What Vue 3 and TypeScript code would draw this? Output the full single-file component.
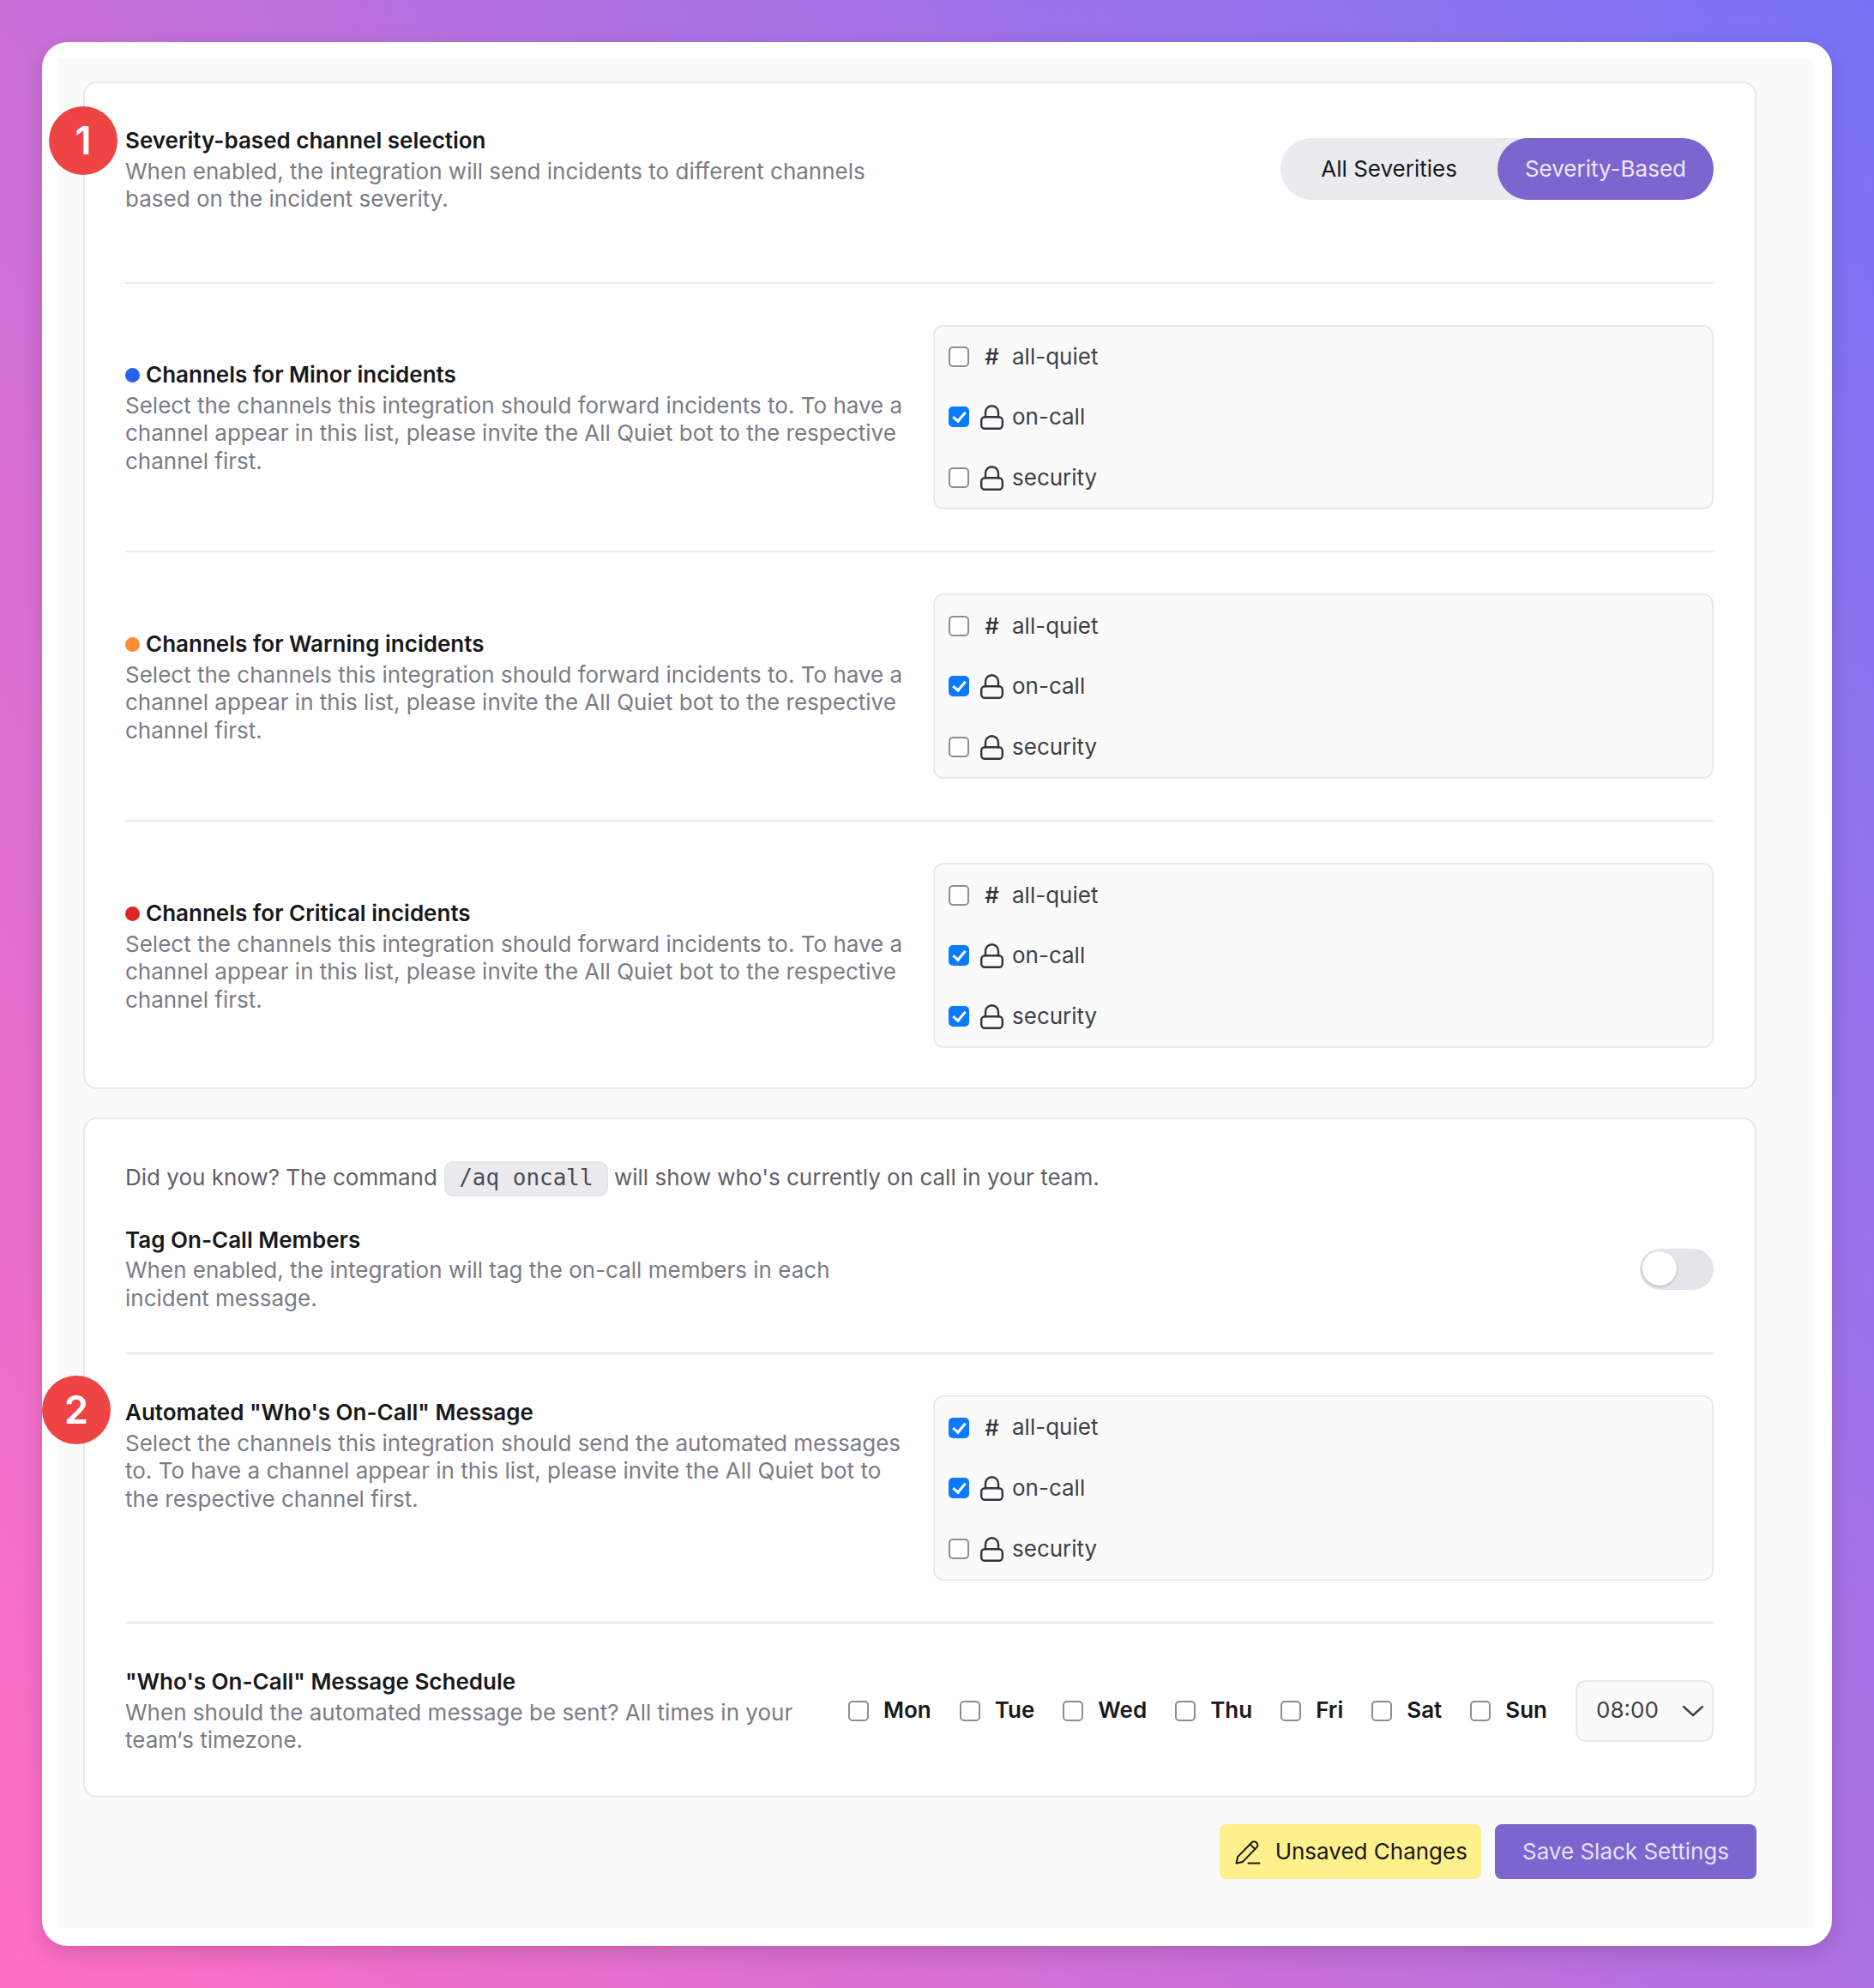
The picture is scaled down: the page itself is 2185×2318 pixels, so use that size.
<script setup lang="ts">
interface Channel {
  name: string;
  isPrivate: boolean;
  checked: boolean;
}

interface SeverityRow {
  label: string;
  dot: string;
  selected: string[];
}

const channelNames: Array<Pick<Channel, 'name' | 'isPrivate'>> = [
  { name: 'all-quiet', isPrivate: false },
  { name: 'on-call', isPrivate: true },
  { name: 'security', isPrivate: true },
];

const withSelection = (selected: string[]): Channel[] =>
  channelNames.map((c) => ({ ...c, checked: selected.includes(c.name) }));

const severities: SeverityRow[] = [
  { label: 'Minor', dot: '#2563eb', selected: ['on-call'] },
  { label: 'Warning', dot: '#fd8d30', selected: ['on-call'] },
  { label: 'Critical', dot: '#dc2626', selected: ['on-call', 'security'] },
];

const days = ['Mon', 'Tue', 'Wed', 'Thu', 'Fri', 'Sat', 'Sun'];
</script>

<template>
  <div class="page">
    <div class="window">
      <span class="marker marker--one">1</span>
      <span class="marker marker--two">2</span>

      <div class="inner">
        <section class="card card--first">
          <div class="row row--lead">
            <div class="info info--narrow">
              <h3 class="title">Severity-based channel selection</h3>
              <p class="desc">When enabled, the integration will send incidents to different channels based on the incident severity.</p>
            </div>
            <div class="segment">
              <span class="segment__item">All Severities</span>
              <span class="segment__item segment__item--active">Severity-Based</span>
            </div>
          </div>

          <div v-for="sev in severities" :key="sev.label" class="row row--split">
            <div class="info">
              <h3 class="title">
                <i class="dot" :style="{ background: sev.dot }"></i>Channels for {{ sev.label }} incidents
              </h3>
              <p class="desc">Select the channels this integration should forward incidents to. To have a channel appear in this list, please invite the All Quiet bot to the respective channel first.</p>
            </div>
            <div class="panel">
              <label v-for="ch in withSelection(sev.selected)" :key="ch.name" class="channel">
                <input class="check" type="checkbox" :checked="ch.checked" />
                <svg v-if="ch.isPrivate" class="channel__icon" viewBox="0 0 27 29" fill="none" stroke="currentColor" stroke-width="2.4" stroke-linecap="round" stroke-linejoin="round">
                  <rect x="1.2" y="14.2" width="24.6" height="13.6" rx="4" />
                  <path d="M6 14.2V8.7a7.5 7.5 0 0 1 15 0v5.5" />
                </svg>
                <span v-else class="channel__icon channel__hash">#</span>
                <span class="channel__name">{{ ch.name }}</span>
              </label>
            </div>
          </div>
        </section>

        <section class="card card--second">
          <p class="tip">Did you know? The command <code class="code">/aq oncall</code> will show who's currently on call in your team.</p>

          <div class="row row--tag">
            <div class="info info--narrow">
              <h3 class="title">Tag On-Call Members</h3>
              <p class="desc">When enabled, the integration will tag the on-call members in each incident message.</p>
            </div>
            <span class="switch"><span class="switch__knob"></span></span>
          </div>

          <div class="row row--split row--top">
            <div class="info">
              <h3 class="title">Automated "Who's On-Call" Message</h3>
              <p class="desc">Select the channels this integration should send the automated messages to. To have a channel appear in this list, please invite the All Quiet bot to the respective channel first.</p>
            </div>
            <div class="panel">
              <label v-for="ch in withSelection(['all-quiet', 'on-call'])" :key="ch.name" class="channel">
                <input class="check" type="checkbox" :checked="ch.checked" />
                <svg v-if="ch.isPrivate" class="channel__icon" viewBox="0 0 27 29" fill="none" stroke="currentColor" stroke-width="2.4" stroke-linecap="round" stroke-linejoin="round">
                  <rect x="1.2" y="14.2" width="24.6" height="13.6" rx="4" />
                  <path d="M6 14.2V8.7a7.5 7.5 0 0 1 15 0v5.5" />
                </svg>
                <span v-else class="channel__icon channel__hash">#</span>
                <span class="channel__name">{{ ch.name }}</span>
              </label>
            </div>
          </div>

          <div class="row row--schedule">
            <div class="info">
              <h3 class="title">"Who's On-Call" Message Schedule</h3>
              <p class="desc">When should the automated message be sent? All times in your team‘s timezone.</p>
            </div>
            <div class="schedule">
              <label v-for="day in days" :key="day" class="day">
                <input class="check" type="checkbox" />
                <span>{{ day }}</span>
              </label>
              <div class="select">
                <span>08:00</span>
                <svg class="select__chevron" viewBox="0 0 26 14" fill="none" stroke="currentColor" stroke-width="2.4" stroke-linecap="round" stroke-linejoin="round">
                  <path d="M2 2l11 10L24 2" />
                </svg>
              </div>
            </div>
          </div>
        </section>

        <div class="actions">
          <span class="btn btn--unsaved">
            <svg class="btn__icon" viewBox="0 0 30 30" fill="none" stroke="currentColor" stroke-width="2" stroke-linecap="round" stroke-linejoin="round">
              <path d="M1.5 28.5l1.6-7.4L19.6 4.2a3.7 3.7 0 0 1 5.4 0.3 3.7 3.7 0 0 1 .4 5.4L8.9 26.9z" />
              <path d="M17.6 6.4l5.8 5.6" />
              <path d="M15.5 28.5h13" />
            </svg>
            Unsaved Changes
          </span>
          <span class="btn btn--save">Save Slack Settings</span>
        </div>
      </div>
    </div>
  </div>
</template>

<style>
body {
  margin: 0;
}
</style>

<style scoped>
.page {
  box-sizing: border-box;
  min-height: 2318px;
  padding: 49px;
  background: linear-gradient(58deg, #ff6ec4, #7873f5);
  font-family: Inter, "Noto Sans", sans-serif;
  font-size: 26px;
  line-height: 32.5px;
  color: #18181b;
}

.window {
  position: relative;
  padding: 19px 22px 21px 19px;
  background: #fff;
  border-radius: 30px;
  box-shadow: 0 8px 24px rgba(0, 0, 0, 0.14);
}

.inner {
  padding: 27px 66px 57px 29px;
  background: #fafafa;
}

.marker {
  position: absolute;
  width: 80px;
  height: 80px;
  border-radius: 50%;
  background: #ef4444;
  color: #fff;
  font-size: 45px;
  font-weight: 600;
  line-height: 80px;
  text-align: center;
}

.marker--one {
  left: 8px;
  top: 75px;
}

.marker--two {
  left: 0;
  top: 1555px;
}

.card {
  padding: 50px 48px 50px 47px;
  background: #fff;
  border: 2px solid #e8e8ee;
  border-radius: 16px;
}

.card--first {
  padding-bottom: 46px;
}

.card--second {
  margin-top: 33px;
  padding-bottom: 48px;
}

.row {
  display: flex;
  align-items: center;
  justify-content: space-between;
  padding: 48px 0;
  border-top: 2px solid #e8e8ee;
}

.row:last-child {
  padding-bottom: 0;
}

.row--lead {
  padding: 1px 0 80px;
  border-top: 0;
}

.row--lead .segment {
  align-self: flex-start;
  margin-top: 13px;
}

.row--split .info {
  width: 922px;
  padding-top: 3px;
}

.row--top {
  align-items: flex-start;
}

.row--top .info {
  padding-top: 4px;
}

.row--tag {
  padding: 35px 0 47px;
  border-top: 0;
}

.row--schedule {
  padding-top: 50px;
}

.row--schedule .info {
  width: 814px;
  padding-top: 2px;
}

.row .info--narrow {
  width: 894px;
}

.title {
  margin: 0;
  font-size: inherit;
  font-weight: 600;
  line-height: 32.5px;
}

.desc {
  margin: 3px 0 0;
  color: #7b7b86;
}

.dot {
  display: inline-block;
  width: 17px;
  height: 17px;
  margin-right: 7px;
  border-radius: 50%;
}

.segment {
  display: flex;
  height: 72px;
  border-radius: 36px;
  background: #ebebef;
}

.segment__item {
  display: flex;
  align-items: center;
  padding: 0 47px;
  border-radius: 36px;
  white-space: nowrap;
}

.segment__item--active {
  padding: 0 32px;
  background: #7c65ce;
  color: #ece8fa;
}

.panel {
  box-sizing: border-box;
  width: 910px;
  padding: 0 16px;
  background: #fafafa;
  border: 2px solid #e8e8ee;
  border-radius: 12px;
}

.channel {
  display: flex;
  align-items: center;
  height: 70.67px;
  color: #3f3f46;
}

.channel__icon {
  flex: none;
  width: 27px;
  height: 29px;
  margin: 0 10px 0 13px;
  color: #33333c;
}

.channel__hash {
  font-weight: 500;
  line-height: 29px;
  text-align: center;
}

.check {
  flex: none;
  box-sizing: border-box;
  position: relative;
  width: 24px;
  height: 24px;
  margin: 0;
  appearance: none;
  background: #fff;
  border: 2px solid #8e8e93;
  border-radius: 5px;
}

.check:checked {
  background: #0a7aff;
  border-color: #0a7aff;
}

.check:checked::after {
  content: "";
  position: absolute;
  left: 6px;
  top: 1px;
  width: 6px;
  height: 12px;
  border: solid #fff;
  border-width: 0 3px 3px 0;
  transform: rotate(40deg);
}

.switch {
  position: relative;
  width: 86px;
  height: 48px;
  border-radius: 24px;
  background: #e4e4ea;
}

.switch__knob {
  position: absolute;
  left: 3px;
  top: 3px;
  width: 40px;
  height: 40px;
  border-radius: 50%;
  background: #fff;
  box-shadow: 0 1px 3px rgba(0, 0, 0, 0.25);
}

.tip {
  margin: -1.5px 0 0;
  color: #5f5f6a;
  white-space: nowrap;
}

.code {
  display: inline-block;
  box-sizing: border-box;
  height: 41px;
  margin: 0 0 0 1px;
  padding: 0 15px;
  background: #ebebef;
  border: 2px solid #e4e4ea;
  border-radius: 10px;
  color: #4b4b55;
  font-family: "DejaVu Sans Mono", monospace;
  font-size: 26px;
  line-height: 35px;
  vertical-align: middle;
}

.schedule {
  display: flex;
  align-items: center;
  color: #18181b;
}

.day {
  display: flex;
  align-items: center;
  gap: 17px;
  margin-right: 33px;
  font-weight: 600;
}

.select {
  box-sizing: border-box;
  display: flex;
  align-items: center;
  justify-content: space-between;
  width: 161px;
  height: 72px;
  padding: 0 9px 0 22px;
  background: #fafafa;
  border: 2px solid #e8e8ee;
  border-radius: 12px;
  color: #3f3f46;
}

.select__chevron {
  width: 26px;
  height: 14px;
}

.actions {
  display: flex;
  justify-content: flex-end;
  gap: 16px;
  margin-top: 31px;
}

.btn {
  display: flex;
  align-items: center;
  height: 64px;
  padding: 0 32px;
  border-radius: 8px;
  white-space: nowrap;
}

.btn--unsaved {
  gap: 17px;
  padding: 0 16px 0 18px;
  background: #fef08a;
}

.btn--save {
  background: #7c65ce;
  color: #e6e1f8;
}

.btn__icon {
  width: 30px;
  height: 30px;
}
</style>
